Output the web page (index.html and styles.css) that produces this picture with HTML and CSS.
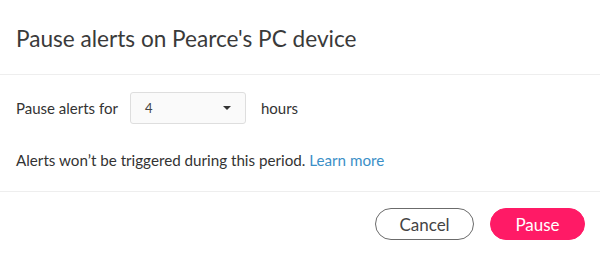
FILE: index.html
```html
<!DOCTYPE html>
<html lang="en">
<head>
    <meta charset="UTF-8">
    <meta name="viewport" content="width=device-width, initial-scale=1.0">
    <title>Pause alerts</title>
    <link rel="stylesheet" href="styles.css">
</head>
<body>
    <div class="dialog">
        <div class="header">
            <h2 class="title">Pause alerts on Pearce's PC device</h2>
        </div>
        <div class="content">
            <div class="row">
                <span class="label">Pause alerts for</span>
                <div class="select">
                    <span class="value">4</span>
                    <span class="caret"></span>
                </div>
                <span class="unit">hours</span>
            </div>
            <p class="note">Alerts won’t be triggered during this period. <a href="#" class="link">Learn more</a></p>
        </div>
        <div class="footer">
            <button class="btn btn-cancel">Cancel</button>
            <button class="btn btn-pause">Pause</button>
        </div>
    </div>
</body>
</html>
```

FILE: styles.css
```css
* {
    margin: 0;
    padding: 0;
    box-sizing: border-box;
}

body {
    background-color: #fff;
    font-family: Lato, "Open Sans", sans-serif;
    color: #333;
}

.dialog {
    width: 600px;
    height: 254px;
}

.header {
    height: 75px;
    padding: 2px 16px 0;
    display: flex;
    align-items: center;
    border-bottom: 1px solid #eeeeee;
}

.title {
    font-size: 22.6px;
    font-weight: normal;
    color: #3a3a3a;
}

.content {
    padding: 17px 16px 21px;
}

.row {
    display: flex;
    align-items: center;
    height: 32px;
    font-size: 15px;
}

.select {
    width: 116px;
    height: 32px;
    margin: 0 15px 0 12px;
    padding: 0 14px 0 14px;
    display: flex;
    align-items: center;
    justify-content: space-between;
    background-color: #fafafa;
    border: 1px solid #dedede;
    border-radius: 3px;
}

.value {
    font-size: 13px;
    color: #444;
}

.caret {
    width: 0;
    height: 0;
    border-left: 4px solid transparent;
    border-right: 4px solid transparent;
    border-top: 4px solid #333;
}

.note {
    margin-top: 26px;
    font-size: 15.2px;
    line-height: 20px;
}

.link {
    color: #3b8fc7;
    text-decoration: none;
}

.footer {
    border-top: 1px solid #eeeeee;
    padding: 16px 15px 0;
    display: flex;
    justify-content: flex-end;
    gap: 16px;
}

.btn {
    height: 32px;
    border-radius: 16px;
    font-family: Lato, "Open Sans", sans-serif;
    font-size: 17px;
}

.btn-cancel {
    width: 99px;
    background-color: #fff;
    border: 1px solid #6b6b6b;
    color: #444;
}

.btn-pause {
    width: 95px;
    background-color: #ff1a66;
    border: 1px solid #ff1a66;
    color: #fff;
}
```
